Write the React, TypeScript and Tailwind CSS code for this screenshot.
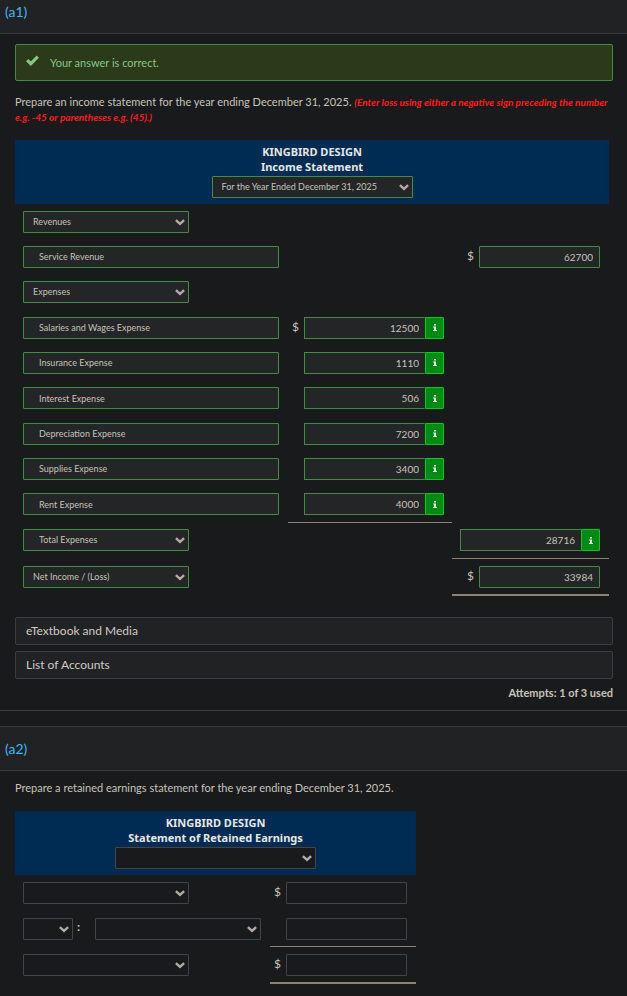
import React from 'react';
import clsx from 'clsx';

interface FieldProps {
  label: string;
  value?: string;
  className?: string;
}

interface StatementRow {
  label: string;
  kind: 'select' | 'text';
  indent?: boolean;
  column?: 'detail' | 'total';
  value?: string;
  dollar?: boolean;
  info?: boolean;
}

const incomeRows: StatementRow[] = [
  { label: 'Revenues', kind: 'select' },
  { label: 'Service Revenue', kind: 'text', column: 'total', value: '62700', dollar: true },
  { label: 'Expenses', kind: 'select' },
  { label: 'Salaries and Wages Expense', kind: 'text', column: 'detail', value: '12500', dollar: true, info: true },
  { label: 'Insurance Expense', kind: 'text', column: 'detail', value: '1110', info: true },
  { label: 'Interest Expense', kind: 'text', column: 'detail', value: '506', info: true },
  { label: 'Depreciation Expense', kind: 'text', column: 'detail', value: '7200', info: true },
  { label: 'Supplies Expense', kind: 'text', column: 'detail', value: '3400', info: true },
  { label: 'Rent Expense', kind: 'text', column: 'detail', value: '4000', info: true },
  { label: 'Total Expenses', kind: 'select', indent: true, column: 'total', value: '28716', info: true },
  { label: 'Net Income / (Loss)', kind: 'select', column: 'total', value: '33984', dollar: true },
];

const SelectField: React.FC<FieldProps & { indent?: boolean }> = ({ label, value, className, indent }) => (
  <span className={clsx('relative block h-[22px]', className)}>
    <select
      aria-label={label}
      defaultValue={value ?? ''}
      className={clsx(
        'block h-full w-full appearance-none rounded-[1px] border pr-5 text-[9px] leading-5 outline-none',
        indent ? 'pl-[15px]' : 'pl-[9px]',
        value ? 'border-[#458b46] bg-[#232527]' : 'border-[#414547] bg-[#191a1c]'
      )}
    >
      <option value={value ?? ''}>{value ?? ''}</option>
    </select>
    <svg
      className="pointer-events-none absolute top-2 right-1 h-[7px] w-[10px]"
      viewBox="0 0 10 7"
      fill="none"
      stroke="#b3aca2"
      strokeWidth="2.4"
      aria-hidden="true"
    >
      <path d="M0.9 1.2 L5 4.9 L9.1 1.2" />
    </svg>
  </span>
);

const AmountField: React.FC<FieldProps & { dollar?: boolean; info?: boolean }> = ({ label, value, dollar, info }) => (
  <div className="flex h-[22px] items-center justify-end">
    {dollar && <span className="mr-[5px] pb-0.5 text-[12px] leading-5">$</span>}
    <input
      type="text"
      aria-label={label}
      defaultValue={value}
      className={clsx(
        'h-full w-[121px] rounded-[1px] border px-[6px] text-right text-[10px] outline-none',
        value ? 'border-[#458b46] bg-[#232527]' : 'border-[#414547] bg-[#191a1c]',
        info && 'border-r-0'
      )}
    />
    {info && (
      <button
        type="button"
        aria-label={`${label} details`}
        className="flex h-full w-[19px] items-center justify-center rounded-r-[1px] border border-[#00cc1b] bg-[#008914]"
      >
        <svg className="h-[7px] w-1" viewBox="0 0 4 7" fill="#e8e6e3" aria-hidden="true">
          <path d="M1 0h2v1.5H1zM0 2.5h3V6h1v1H0V6h1V3.5H0z" />
        </svg>
      </button>
    )}
  </div>
);

const StatementHead: React.FC<{ title: string; period?: string; columns: number }> = ({ title, period, columns }) => (
  <thead>
    <tr>
      <th colSpan={columns} className="h-16 bg-[#002b53] p-0 align-top">
        <div className="pt-1 font-['Noto_Sans','Open_Sans',sans-serif] text-[11px] leading-[15px] font-bold text-[#e8e6e3]">
          KINGBIRD DESIGN
          <br />
          {title}
        </div>
        <SelectField label={`${title} period`} value={period} className="mx-auto mt-0.5 w-[201px] font-normal" />
      </th>
    </tr>
  </thead>
);

const IncomeStatement: React.FC = () => (
  <div className="mr-1">
    <table className="w-full table-fixed border-separate border-spacing-0">
      <colgroup>
        <col />
        <col className="w-[164px]" />
        <col className="w-[157px]" />
      </colgroup>
      <StatementHead title="Income Statement" period="For the Year Ended December 31, 2025" columns={3} />
      <tbody className="[&>tr]:h-[35px] [&>tr:last-child]:h-[38px] [&>tr:nth-child(3n)]:h-9 [&>tr:nth-child(10)]:h-9">
        {incomeRows.map((row) => {
          const isTotal = row.label === 'Total Expenses';
          const isNet = row.label.startsWith('Net Income');
          const amount = (
            <AmountField label={`${row.label} amount`} value={row.value} dollar={row.dollar} info={row.info} />
          );

          return (
            <tr key={row.label}>
              <td className="py-0 pr-[9px] pl-2">
                {row.kind === 'select' ? (
                  <SelectField label={row.label} value={row.label} indent={row.indent} className="w-[166px]" />
                ) : (
                  <input
                    type="text"
                    aria-label="Account"
                    defaultValue={row.label}
                    className="block h-[22px] w-full rounded-[1px] border border-[#458b46] bg-[#232527] px-[15px] text-[9px] outline-none"
                  />
                )}
              </td>
              <td className={clsx('py-0 pr-2 pl-0', isTotal && 'border-t border-[#8c8273]')}>
                {row.column === 'detail' && amount}
              </td>
              <td className={clsx('py-0 pr-[9px] pl-0', isNet && 'border-t border-b-2 border-[#8c8273]')}>
                {row.column === 'total' && amount}
              </td>
            </tr>
          );
        })}
      </tbody>
    </table>
  </div>
);

const RetainedEarningsStatement: React.FC = () => (
  <table className="w-[401px] table-fixed border-separate border-spacing-0">
    <colgroup>
      <col />
      <col className="w-[146px]" />
    </colgroup>
    <StatementHead title="Statement of Retained Earnings" columns={2} />
    <tbody>
      <tr className="h-9">
        <td className="py-0 pr-0 pl-2">
          <SelectField label="Opening balance" className="w-[166px]" />
        </td>
        <td className="py-0 pr-[9px] pl-0">
          <AmountField label="Opening balance amount" dollar />
        </td>
      </tr>
      <tr className="h-[35px]">
        <td className="py-0 pr-0 pl-2">
          <div className="flex">
            <SelectField label="Add or less" className="w-[50px]" />
            <span className="w-[22px] pl-1 text-[12px] leading-[18px] font-bold">:</span>
            <SelectField label="Adjustment" className="w-[166px]" />
          </div>
        </td>
        <td className="py-0 pr-[9px] pl-0">
          <AmountField label="Adjustment amount" />
        </td>
      </tr>
      <tr className="h-[38px]">
        <td className="py-0 pr-0 pl-2">
          <SelectField label="Closing balance" className="w-[166px]" />
        </td>
        <td className="border-t border-b-2 border-[#8c8273] py-0 pr-[9px] pl-0">
          <AmountField label="Closing balance amount" dollar />
        </td>
      </tr>
    </tbody>
  </table>
);

const ResourceButton: React.FC<{ children: React.ReactNode }> = ({ children }) => (
  <button
    type="button"
    className="block h-7 w-full rounded-xs border border-[#3b3e40] bg-[#202224] px-[10px] text-left text-[12px] leading-5 text-[#d0cbc3]"
  >
    {children}
  </button>
);

const App: React.FC = () => {
  return (
    <main className="min-h-screen bg-[#191a1c] font-['Lato',sans-serif] text-[11px] leading-[15px] text-[#c8c3ba]">
      <section className="border-b border-[#393b3d] pb-[10px]">
        <h2 className="h-[34px] border-b border-[#393b3d] bg-[#202224] px-[5px] pt-0.5 text-[14px] leading-5 text-[#41b8f0]">
          (a1)
        </h2>
        <div className="pt-[10px] pr-[14px] pl-[15px]">
          <div
            role="status"
            className="flex h-[37px] items-center rounded-xs border border-[#458b46] bg-[#2b3a18] pl-[10px] text-[#86c888]"
          >
            <svg className="mr-[11px] mb-1 h-[11px] w-[13px]" viewBox="0 0 13 11" fill="none" stroke="currentColor" strokeWidth="3.2" aria-hidden="true">
              <path d="M1.2 5.2 L4.8 8.7 L11.8 1.7" />
            </svg>
            Your answer is correct.
          </div>
          <p className="mt-[13px] -mr-[10px] mb-4">
            Prepare an income statement for the year ending December 31, 2025.{' '}
            <em className="text-[10px] leading-none font-bold text-[#ff1a1a]">
              (Enter loss using either a negative sign preceding the number
              <br />
              e.g. -45 or parentheses e.g. (45).)
            </em>
          </p>
          <IncomeStatement />
          <div className="mt-[21px] flex flex-col gap-[6px]">
            <ResourceButton>eTextbook and Media</ResourceButton>
            <ResourceButton>List of Accounts</ResourceButton>
          </div>
          <p className="mt-[6px] text-right font-bold">Attempts: 1 of 3 used</p>
        </div>
      </section>

      <section className="mt-[15px]">
        <h2 className="h-[45px] border-y border-[#393b3d] bg-[#202224] px-[5px] text-[14px] leading-[43px] text-[#41b8f0]">
          (a2)
        </h2>
        <div className="pt-[9px] pr-[14px] pb-3 pl-[15px]">
          <p className="mb-4">Prepare a retained earnings statement for the year ending December 31, 2025.</p>
          <RetainedEarningsStatement />
        </div>
      </section>
    </main>
  );
};

export default App;
